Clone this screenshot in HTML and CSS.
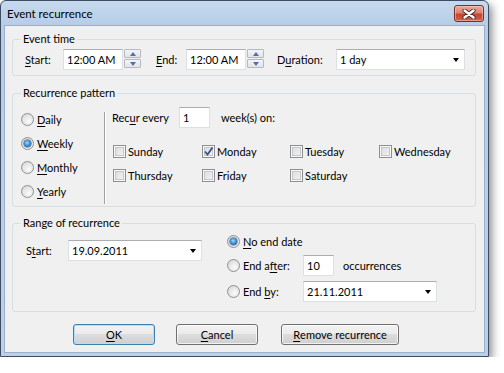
FILE: index.html
```html
<!DOCTYPE html>
<html lang="en">

<head>
    <meta charset="UTF-8">
    <meta name="viewport" content="width=device-width, initial-scale=1.0">
    <title>Event recurrence</title>
    <link rel="stylesheet" href="styles.css">
</head>

<body>
    <div class="window">
        <div class="titlebar">
            <span class="title">Event recurrence</span>
            <span class="close-btn">
                <svg width="14" height="10" viewBox="0 0 14 10">
                    <path d="M2.5 1.5 L11.5 8.5 M11.5 1.5 L2.5 8.5" stroke="#4b2a26" stroke-width="4.2" stroke-linecap="round" fill="none"/>
                    <path d="M2.5 1.5 L11.5 8.5 M11.5 1.5 L2.5 8.5" stroke="#ffffff" stroke-width="2.4" stroke-linecap="round" fill="none"/>
                </svg>
            </span>
        </div>

        <div class="client">
            <!-- Event time -->
            <fieldset class="group group-time">
                <legend>Event time</legend>
                <div class="time-row">
                    <span class="lbl lbl-start"><u>S</u>tart:</span>
                    <span class="textbox tb-time">12:00 AM</span>
                    <span class="spin"><span class="spin-up"></span><span class="spin-down"></span></span>
                    <span class="lbl lbl-end"><u>E</u>nd:</span>
                    <span class="textbox tb-time">12:00 AM</span>
                    <span class="spin"><span class="spin-up"></span><span class="spin-down"></span></span>
                    <span class="lbl lbl-duration">D<u>u</u>ration:</span>
                    <span class="textbox combo combo-duration">1 day</span>
                </div>
            </fieldset>

            <!-- Recurrence pattern -->
            <fieldset class="group group-pattern">
                <legend>Recurrence pattern</legend>
                <div class="pattern-body">
                    <div class="pattern-types">
                        <div class="option"><span class="radio"></span><span><u>D</u>aily</span></div>
                        <div class="option"><span class="radio checked"></span><span><u>W</u>eekly</span></div>
                        <div class="option"><span class="radio"></span><span><u>M</u>onthly</span></div>
                        <div class="option"><span class="radio"></span><span><u>Y</u>early</span></div>
                    </div>
                    <div class="separator"></div>
                    <div class="pattern-detail">
                        <div class="recur-row">
                            <span class="lbl lbl-recur">Rec<u>u</u>r every</span>
                            <span class="textbox tb-small">1</span>
                            <span class="lbl lbl-weeks">week(s) on:</span>
                        </div>
                        <div class="days">
                            <div class="day"><span class="check"></span>Sunday</div>
                            <div class="day"><span class="check checked"><svg width="11" height="11" viewBox="0 0 11 11"><path d="M2 5.5 L4.5 8.5 L9.5 1.5" stroke="#3a4f8c" stroke-width="1.8" fill="none"/></svg></span>Monday</div>
                            <div class="day"><span class="check"></span>Tuesday</div>
                            <div class="day"><span class="check"></span>Wednesday</div>
                            <div class="day"><span class="check"></span>Thursday</div>
                            <div class="day"><span class="check"></span>Friday</div>
                            <div class="day"><span class="check"></span>Saturday</div>
                        </div>
                    </div>
                </div>
            </fieldset>

            <!-- Range of recurrence -->
            <fieldset class="group group-range">
                <legend>Range of recurrence</legend>
                <div class="range-body">
                    <div class="range-start">
                        <span class="lbl lbl-rstart">S<u>t</u>art:</span>
                        <span class="textbox combo combo-date">19.09.2011</span>
                    </div>
                    <div class="range-end">
                        <div class="option end-row1"><span class="radio checked"></span><span><u>N</u>o end date</span></div>
                        <div class="option end-row2">
                            <span class="radio"></span><span class="lbl lbl-after">End a<u>f</u>ter:</span>
                            <span class="textbox tb-small">10</span>
                            <span class="lbl lbl-occ">occurrences</span>
                        </div>
                        <div class="option end-row3">
                            <span class="radio"></span><span class="lbl lbl-after">End <u>b</u>y:</span>
                            <span class="textbox combo combo-date">21.11.2011</span>
                        </div>
                    </div>
                </div>
            </fieldset>

            <div class="buttons">
                <span class="btn btn-default"><u>O</u>K</span>
                <span class="btn btn-cancel"><u>C</u>ancel</span>
                <span class="btn btn-remove"><u>R</u>emove recurrence</span>
            </div>
        </div>
    </div>
</body>

</html>
```

FILE: styles.css
```css
html,
body {
    margin: 0;
    padding: 0;
    background: #fff;
}

body {
    font-family: "Lato", "Liberation Sans", sans-serif;
    font-size: 11px;
    color: #000;
}

u {
    text-decoration: underline;
    text-underline-offset: 2px;
}

/* window frame */
.window {
    width: 489px;
    height: 357px;
    box-sizing: border-box;
    border: 1px solid #3d4c60;
    border-radius: 6px 6px 0 0;
    background: linear-gradient(to bottom, #c6d9ee 0, #b7cde8 24px, #bcd0ea 100%);
    box-shadow: 3px 4px 9px rgba(0, 0, 0, .45);
    padding: 0 3px 3px 3px;
    display: flex;
    flex-direction: column;
}

.titlebar {
    height: 24px;
    display: flex;
    justify-content: space-between;
    align-items: flex-start;
}

.title {
    padding-left: 3px;
    line-height: 26px;
    font-size: 11.5px;
}

.close-btn {
    width: 30px;
    height: 17px;
    box-sizing: border-box;
    margin-top: 4px;
    margin-right: 1px;
    border: 1px solid #7a2e24;
    border-radius: 3px;
    background: linear-gradient(to bottom, #e8ab9f 0, #d98472 45%, #c4442f 55%, #d2644f 100%);
    box-shadow: inset 0 0 0 1px rgba(255, 210, 200, .5);
    display: flex;
    align-items: center;
    justify-content: center;
}

.client {
    flex: 1;
    background: #f0f0f0;
    border: 1px solid #9bb0cb;
    box-sizing: border-box;
}

/* group boxes */
.group {
    border: 1px solid #d5dfe5;
    border-radius: 3px;
    margin: 0 8px 0 7px;
    padding: 0;
    min-width: 0;
}

.group legend {
    margin-left: 8px;
    padding: 0 2px;
    line-height: 14px;
}

.group-time {
    margin-top: 6px;
}

.group-pattern {
    margin-top: 10px;
}

.group-range {
    margin-top: 9px;
}

.lbl {
    display: inline-block;
    white-space: nowrap;
}

/* text boxes and combos */
.textbox {
    display: flex;
    align-items: center;
    height: 21px;
    box-sizing: border-box;
    padding-left: 3px;
    background: #fff;
    border: 1px solid #dbdfe6;
    border-top-color: #abadb3;
    white-space: nowrap;
}

.combo {
    position: relative;
}

.combo::after {
    content: "";
    position: absolute;
    right: 5px;
    top: 8px;
    border-left: 3.5px solid transparent;
    border-right: 3.5px solid transparent;
    border-top: 4px solid #000;
}

/* event time row */
.time-row {
    display: flex;
    align-items: center;
    padding: 3px 0 5px 12px;
}

.lbl-start {
    width: 38px;
}

.tb-time {
    width: 60px;
}

.spin {
    display: flex;
    flex-direction: column;
    gap: 1px;
    margin-left: 1px;
    align-self: flex-start;
    margin-top: 0;
}

.spin span {
    width: 17px;
    height: 9px;
    box-sizing: border-box;
    border: 1px solid #b6b9c0;
    border-radius: 1px;
    background: linear-gradient(to bottom, #f4f4f6, #e2e4e9);
    display: flex;
    align-items: center;
    justify-content: center;
}

.spin-up::after {
    content: "";
    border-left: 3.5px solid transparent;
    border-right: 3.5px solid transparent;
    border-bottom: 4px solid #4f6fa8;
}

.spin-down::after {
    content: "";
    border-left: 3.5px solid transparent;
    border-right: 3.5px solid transparent;
    border-top: 4px solid #4f6fa8;
}

.lbl-end {
    width: 30px;
    margin-left: 15px;
}

.lbl-duration {
    width: 59px;
    margin-left: 13px;
}

.combo-duration {
    width: 129px;
}

/* recurrence pattern */
.pattern-body {
    display: flex;
}

.pattern-types {
    width: 83px;
    padding: 7px 0 3px 8px;
}

.option {
    display: flex;
    align-items: center;
    height: 24px;
}

.radio {
    width: 13px;
    height: 13px;
    box-sizing: border-box;
    border-radius: 50%;
    border: 1px solid #8e9092;
    background: radial-gradient(circle at 60% 65%, #fbfbfb 0, #e9e9e9 45%, #cfd0d2 100%);
    margin-right: 3px;
    display: flex;
    align-items: center;
    justify-content: center;
    flex: none;
}

.radio.checked::after {
    content: "";
    width: 7px;
    height: 7px;
    border-radius: 50%;
    background: radial-gradient(circle at 45% 40%, #a9dcfa 0, #3f92d6 45%, #0f4c8c 100%);
    box-shadow: 0 0 0 .5px #1a4772;
}

.separator {
    width: 1px;
    background: #a0a0a0;
    border-right: 1px solid #fff;
    margin: 12px 0 2px;
}

.pattern-detail {
    padding-left: 6px;
}

.recur-row {
    display: flex;
    align-items: center;
    margin-top: 7px;
}

.lbl-recur {
    width: 67px;
}

.tb-small {
    width: 31px;
}

.lbl-weeks {
    margin-left: 11px;
}

.days {
    display: grid;
    grid-template-columns: 89px 88px 89px 89px;
    grid-auto-rows: 24px;
    margin-top: 11px;
    padding-left: 1px;
}

.day {
    display: flex;
    align-items: center;
}

.check {
    width: 13px;
    height: 13px;
    box-sizing: border-box;
    border: 1px solid #8f8f8f;
    background: linear-gradient(135deg, #d7d8da 0, #f7f7f7 100%);
    box-shadow: inset 0 0 0 1px #f8f8f8, inset 0 0 0 2px #c3c6cb;
    margin-right: 2px;
    display: flex;
    align-items: center;
    justify-content: center;
    flex: none;
}

.check svg {
    display: block;
}

/* range of recurrence */
.range-body {
    display: flex;
    padding: 0 0 7px 13px;
}

.range-start {
    display: flex;
    align-items: center;
    margin-top: 10px;
    align-self: flex-start;
}

.lbl-rstart {
    width: 42px;
}

.combo-date {
    width: 134px;
}

.range-end {
    margin-left: 25px;
}

.end-row1 {
    height: 23px;
}

.end-row2 {
    height: 25px;
}

.end-row3 {
    height: 26px;
}

.lbl-after {
    width: 60px;
}

.lbl-occ {
    margin-left: 9px;
}

/* buttons */
.buttons {
    display: flex;
    margin-top: 12px;
    padding-left: 68px;
}

.btn {
    height: 21px;
    box-sizing: border-box;
    border: 1px solid #707070;
    border-radius: 3px;
    background: linear-gradient(to bottom, #f2f2f2 0, #ebebeb 50%, #dddddd 50%, #cfcfcf 100%);
    box-shadow: inset 0 0 0 1px rgba(255, 255, 255, .7);
    display: flex;
    align-items: center;
    justify-content: center;
}

.btn-default {
    width: 82px;
    border-color: #3c7fb1;
    box-shadow: inset 0 0 0 1px #b3e0f8;
}

.btn-cancel {
    width: 82px;
    margin-left: 21px;
}

.btn-remove {
    width: 118px;
    margin-left: 23px;
}
```
